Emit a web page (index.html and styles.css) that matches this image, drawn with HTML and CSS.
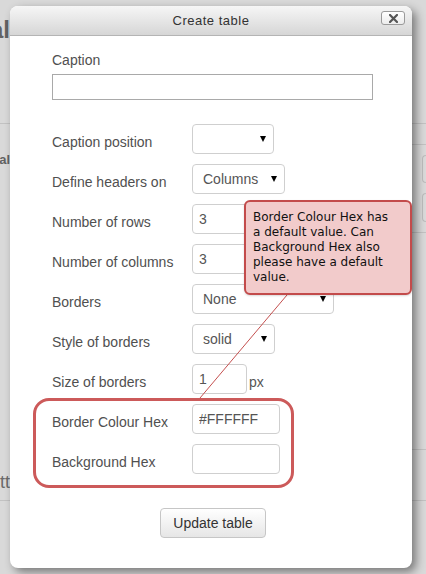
FILE: index.html
```html
<!DOCTYPE html>
<html lang="en">
<head>
<meta charset="utf-8">
<title>Create table</title>
<link rel="stylesheet" href="styles.css">
</head>
<body>
<div class="page">
  <div class="page-top">
    <div class="tail tail-heading"><span>General</span></div>
  </div>
  <div class="rule"></div>
  <div class="page-mid">
    <div class="page-left">
      <div class="tail tail-bold"><span>Optional</span></div>
      <div class="tail tail-big"><span>Submitt</span></div>
    </div>
    <div class="page-right">
      <div class="rule r1"></div>
      <div class="ghost-box b1"></div>
      <div class="ghost-box b2"></div>
      <div class="rule r2"></div>
      <div class="rule r3"></div>
    </div>
  </div>
  <div class="rule"></div>
</div>

<div class="dialog">
  <div class="dialog-header">
    <span class="spacer"></span>
    <span class="dialog-title">Create table</span>
    <button class="close-btn" type="button" aria-label="Close">
      <svg width="9" height="9" viewBox="0 0 9 9"><path d="M1 1 L8 8 M8 1 L1 8" stroke="#555" stroke-width="2.2" stroke-linecap="square"/></svg>
    </button>
  </div>
  <div class="dialog-body">
    <div class="caption-label">Caption</div>
    <input class="caption-input" type="text" value="">

    <div class="rows">
      <div class="form-row">
        <div class="row-label">Caption position</div>
        <div class="select w-cappos"><span class="sel-text"></span><span class="caret"></span></div>
      </div>
      <div class="form-row">
        <div class="row-label">Define headers on</div>
        <div class="select w-headers"><span class="sel-text">Columns</span><span class="caret"></span></div>
      </div>
      <div class="form-row">
        <div class="row-label">Number of rows</div>
        <input class="text-input w-num" type="text" value="3">
      </div>
      <div class="form-row">
        <div class="row-label">Number of columns</div>
        <input class="text-input w-num" type="text" value="3">
      </div>
      <div class="form-row">
        <div class="row-label">Borders</div>
        <div class="select w-borders"><span class="sel-text">None</span><span class="caret"></span></div>
      </div>
      <div class="form-row">
        <div class="row-label">Style of borders</div>
        <div class="select w-style"><span class="sel-text">solid</span><span class="caret"></span></div>
      </div>
      <div class="form-row">
        <div class="row-label">Size of borders</div>
        <input class="text-input w-size" type="text" value="1">
        <span class="unit">px</span>
      </div>
      <div class="form-row">
        <div class="row-label">Border Colour Hex</div>
        <input class="text-input w-hex" type="text" value="#FFFFFF">
      </div>
      <div class="form-row">
        <div class="row-label">Background Hex</div>
        <input class="text-input w-hex" type="text" value="">
      </div>
    </div>

    <div class="actions">
      <button class="update-btn" type="button">Update table</button>
    </div>
  </div>
</div>

<div class="highlight"></div>
<svg class="connector" width="426" height="574" viewBox="0 0 426 574">
  <line x1="287" y1="295" x2="200" y2="398" stroke="#c4504f" stroke-width="1"/>
</svg>
<div class="tooltip">Border Colour Hex has<br>a default value. Can<br>Background Hex also<br>please have a default<br>value.</div>
</body>
</html>
```
FILE: styles.css
```css
* { box-sizing: border-box; }

html, body {
  margin: 0;
  padding: 0;
}

body {
  width: 426px;
  height: 574px;
  overflow: hidden;
  background: #d9d9d9;
  font-family: "Liberation Sans", Arial, sans-serif;
  position: relative;
}

/* ---------- dimmed page behind ---------- */
.page {
  width: 426px;
  height: 574px;
  display: flex;
  flex-direction: column;
}

.page-top {
  height: 123px;
  padding-top: 16px;
}

.rule {
  height: 1px;
  background: #c2c2c2;
  flex: none;
}

.tail {
  width: 10px;
  display: flex;
  justify-content: flex-end;
  white-space: nowrap;
  color: #626262;
}

.tail-heading {
  font-size: 24px;
  font-weight: bold;
  line-height: 28px;
}

.page-mid {
  height: 376px;
  display: flex;
}

.page-left {
  display: flex;
  flex-direction: column;
}

.tail-bold {
  margin-top: 28px;
  font-size: 13px;
  font-weight: bold;
  line-height: 16px;
}

.tail-big {
  margin-top: 303px;
  font-size: 18px;
  line-height: 22px;
  color: #6a6a6a;
}

.page-right {
  margin-left: auto;
  width: 14px;
  display: flex;
  flex-direction: column;
}

.page-right .r1 { margin-top: 20px; }
.page-right .r2 { margin-top: 10px; }
.page-right .r3 { margin-top: 216px; }

.ghost-box {
  margin-left: 10px;
  border: 1px solid #bdbdbd;
  border-right: none;
  border-radius: 4px 0 0 4px;
  background: #dadada;
}
.ghost-box.b1 { margin-top: 10px; height: 28px; }
.ghost-box.b2 { margin-top: 10px; height: 29px; }

/* ---------- dialog ---------- */
.dialog {
  position: absolute;
  left: 10px;
  top: 6px;
  width: 402px;
  height: 562px;
  background: #fff;
  border-radius: 8px;
  box-shadow: 4px 4px 10px rgba(0, 0, 0, 0.45);
  overflow: hidden;
}

.dialog-header {
  height: 30px;
  background: linear-gradient(#f6f6f6, #d6d6d6);
  border-bottom: 1px solid #b4b4b4;
  display: grid;
  grid-template-columns: 1fr auto 1fr;
  align-items: center;
}

.dialog-title {
  font-size: 13px;
  letter-spacing: 0.5px;
  color: #333;
  line-height: 16px;
  padding-top: 1px;
}

.close-btn {
  justify-self: end;
  align-self: start;
  margin: 5px 7px 0 0;
  width: 24px;
  height: 14px;
  padding: 0;
  border: 1px solid #9a9a9a;
  border-radius: 3px;
  background: linear-gradient(#ffffff, #ececec);
  display: flex;
  align-items: center;
  justify-content: center;
}

.close-btn svg { display: block; }

.dialog-body {
  padding: 14px 0 0 42px;
  color: #505050;
  font-size: 14px;
}

.caption-label {
  line-height: 20px;
}

.caption-input {
  display: block;
  margin-top: 4px;
  width: 321px;
  height: 26px;
  border: 1px solid #a9a9a9;
  border-radius: 0;
  background: #fff;
  padding: 0 6px;
  font: 14px "Liberation Sans", Arial, sans-serif;
  outline: none;
}

.rows {
  margin-top: 24px;
  display: flex;
  flex-direction: column;
  gap: 10px;
}

.form-row {
  display: flex;
  height: 30px;
}

.row-label {
  width: 140px;
  padding-top: 8px;
  line-height: 20px;
  color: #505050;
}

.select {
  height: 30px;
  border: 1px solid #cfcfcf;
  border-radius: 4px;
  background: #fff;
  display: flex;
  align-items: center;
  justify-content: space-between;
  padding: 0 7px 0 10px;
  color: #555;
  line-height: 20px;
}

.caret {
  width: 0;
  height: 0;
  border-left: 3px solid transparent;
  border-right: 3px solid transparent;
  border-top: 6px solid #000;
}

.w-cappos { width: 82px; }
.w-headers { width: 93px; }
.w-borders { width: 142px; }
.w-style { width: 83px; }

.text-input {
  height: 30px;
  border: 1px solid #cfcfcf;
  border-radius: 4px;
  background: #fff;
  padding: 0 6px;
  font: 14px "Liberation Sans", Arial, sans-serif;
  color: #555;
  outline: none;
}

.w-num { width: 88px; }
.w-size { width: 55px; }
.w-hex { width: 88px; }

.unit {
  margin-left: 2px;
  padding-top: 8px;
  line-height: 20px;
  color: #555;
}

.actions {
  margin-top: 34px;
  margin-left: -38px;
  display: flex;
  justify-content: center;
}

.update-btn {
  height: 30px;
  padding: 0 12px;
  border: 1px solid #c6c6c6;
  border-radius: 4px;
  background: linear-gradient(#ffffff, #e6e6e6);
  font: 14px "Liberation Sans", Arial, sans-serif;
  color: #333;
}

/* ---------- annotations ---------- */
.highlight {
  position: absolute;
  left: 33px;
  top: 398px;
  width: 261px;
  height: 90px;
  border: 3px solid #cc5a5a;
  border-radius: 16px;
}

.connector {
  position: absolute;
  left: 0;
  top: 0;
  pointer-events: none;
}

.tooltip {
  position: absolute;
  left: 244px;
  top: 200px;
  width: 168px;
  height: 95px;
  background: #f2cbcb;
  border: 2px solid #c34b4b;
  border-radius: 6px;
  padding: 8px 7px;
  font-family: "DejaVu Sans", sans-serif;
  font-size: 12px;
  line-height: 15px;
  color: #111;
  box-shadow: 0 1px 2px rgba(0,0,0,0.15);
}
```
